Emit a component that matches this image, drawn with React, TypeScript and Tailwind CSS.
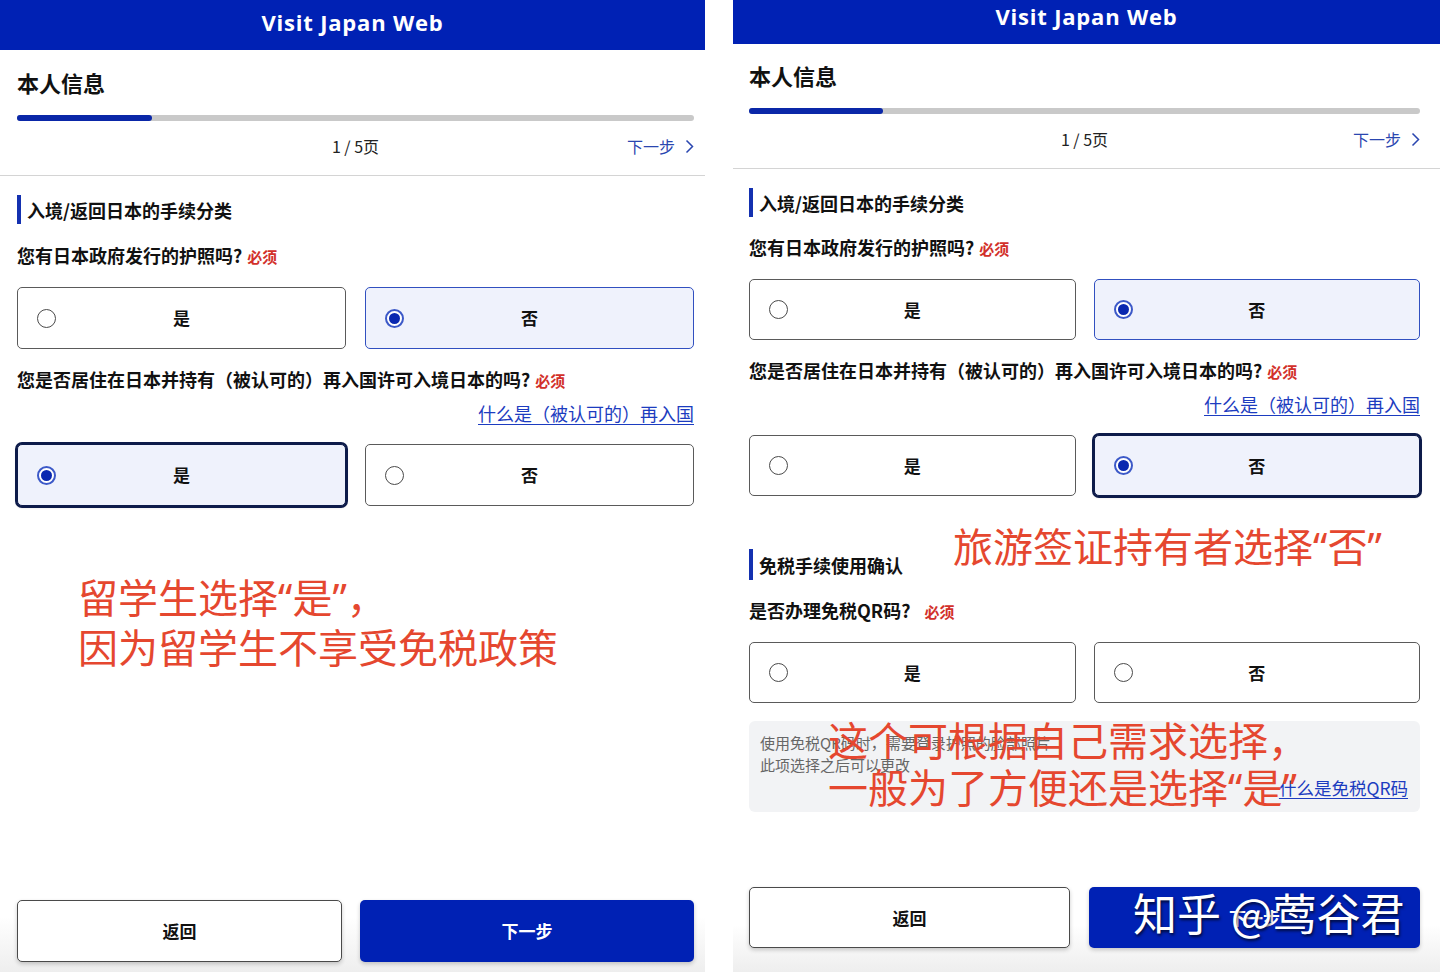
import React from "react";

type OptState = "none" | "sel" | "focus";

function Radio({ checked }: { checked: boolean }) {
  if (checked) {
    return (
      <span className="flex h-[19px] w-[19px] shrink-0 items-center justify-center rounded-full border-2 border-[#3c59c8] bg-white">
        <span className="h-[11px] w-[11px] rounded-full bg-[#0a28b0]" />
      </span>
    );
  }
  return <span className="h-[19px] w-[19px] shrink-0 rounded-full border-[1.5px] border-[#4a4a4a] bg-white" />;
}

function Option({ label, state, h }: { label: string; state: OptState; h: string }) {
  const base = "flex flex-1 items-center rounded-[5px] pl-[19px] pr-[38px]";
  const cls =
    state === "none"
      ? "border border-[#5a5a5a] bg-white"
      : state === "sel"
      ? "border border-[#3150c0] bg-[#eff2fc]"
      : "border border-[#0d1b4a] bg-[#eff2fc] ring-2 ring-[#0d1b4a] shadow-[0_1px_3px_rgba(0,0,0,0.3)]";
  return (
    <div className={`${base} ${cls} ${h}`}>
      <Radio checked={state !== "none"} />
      <span className="flex-1 text-center text-[17px] font-bold text-[#111]">{label}</span>
    </div>
  );
}

function OptionPair({ a, b, h, gap }: { a: OptState; b: OptState; h: string; gap: string }) {
  return (
    <div className={`flex ${gap}`}>
      <Option label="是" state={a} h={h} />
      <Option label="否" state={b} h={h} />
    </div>
  );
}

function Header({ h, pt }: { h: string; pt: string }) {
  return (
    <div className={`flex w-full justify-center bg-[#0021b4] ${h} ${pt}`}>
      <span className="font-['Open_Sans',sans-serif] text-[22px] leading-[30px] font-bold tracking-[0.8px] text-white">
        Visit Japan Web
      </span>
    </div>
  );
}

function Chevron() {
  return (
    <svg width="9" height="15" viewBox="0 0 9 15" className="ml-[10px]">
      <polyline points="1.5,1.5 7.5,7.5 1.5,13.5" fill="none" stroke="#2a46b0" strokeWidth="1.5" />
    </svg>
  );
}

function TopBlock() {
  return (
    <>
      <div className="text-[22px] leading-[30px] font-bold text-[#111]">本人信息</div>
      <div className="mt-[18px] h-[6px] w-full rounded-full bg-[#c9c9c9]">
        <div className="h-[6px] w-[20%] rounded-full bg-[#0a27a8]" />
      </div>
      <div className="mt-[14px] grid grid-cols-3 items-center text-[16px] leading-[22px]">
        <span />
        <span className="text-center text-[#222]">1 / 5页</span>
        <span className="flex items-center justify-end text-[#2a46b0]">
          下一步
          <Chevron />
        </span>
      </div>
    </>
  );
}

function SectionTitle({ text, h }: { text: string; h: string }) {
  return (
    <div className="flex items-center">
      <span className={`w-[4px] bg-[#1431b0] ${h}`} />
      <span className="ml-[6px] text-[18px] leading-[24px] font-bold text-[#111]">{text}</span>
    </div>
  );
}

function Question({ text, mt, reqGap = "ml-[5px]" }: { text: string; mt: string; reqGap?: string }) {
  return (
    <div className={`flex items-baseline ${mt} leading-[26px]`}>
      <span className="text-[18px] font-bold text-[#111]">{text}</span>
      <span className={`${reqGap} text-[15px] font-bold text-[#d2302a]`}>必须</span>
    </div>
  );
}

function Link({ text, mt }: { text: string; mt: string }) {
  return (
    <div className={`${mt} flex justify-end text-[18px] leading-[24px]`}>
      <span className="text-[#1c3cc0] underline underline-offset-[3px]">{text}</span>
    </div>
  );
}

function Buttons({ leftW, h, gap }: { leftW: string; h: string; gap: string }) {
  return (
    <div className={`flex ${gap}`}>
      <div
        className={`flex ${leftW} ${h} items-center justify-center rounded-[5px] border border-[#4a4a4a] bg-white text-[17px] font-bold text-[#111] shadow-[0_2px_4px_rgba(0,0,0,0.2)]`}
      >
        返回
      </div>
      <div
        className={`flex flex-1 ${h} items-center justify-center rounded-[5px] bg-[#0021b4] text-[17px] font-bold text-white shadow-[0_2px_4px_rgba(0,0,0,0.2)]`}
      >
        下一步
      </div>
    </div>
  );
}

const NOTE = "font-['Noto_Sans_CJK_SC',sans-serif] font-normal text-[40px] text-[#e5472f] whitespace-nowrap";

function Q({ c }: { c: string }) {
  return <span className="font-['Noto_Sans',sans-serif]">{c}</span>;
}

function LeftPanel() {
  return (
    <div className="relative flex h-[972px] w-[705px] shrink-0 flex-col bg-white">
      <Header h="h-[50px]" pt="pt-[7px]" />
      <div className="mt-[17px] pr-[11px] pl-[17px]">
        <TopBlock />
      </div>
      <div className="mt-[18px] h-px w-full bg-[#d4d4d4]" />
      <div className="pr-[11px] pl-[17px]">
        <div className="mt-[19px]">
          <SectionTitle text="入境/返回日本的手续分类" h="h-[29px]" />
        </div>
        <Question text="您有日本政府发行的护照吗?" mt="mt-[18px]" />
        <div className="mt-[17px]">
          <OptionPair a="none" b="sel" h="h-[62px]" gap="gap-[19px]" />
        </div>
        <Question text="您是否居住在日本并持有（被认可的）再入国许可入境日本的吗?" mt="mt-[17px]" />
        <Link text="什么是（被认可的）再入国" mt="mt-[7px]" />
        <div className="mt-[19px]">
          <OptionPair a="focus" b="none" h="h-[62px]" gap="gap-[19px]" />
        </div>
        <div className={`mt-[66px] ml-[61px] ${NOTE} leading-[49px]`}>
          <div>
            留学生选择<Q c="“" />是<Q c="”" />，
          </div>
          <div>因为留学生不享受免税政策</div>
        </div>
      </div>
      <div className="flex-1" />
      <div className="bg-linear-to-b from-white from-40% to-[#eeeeee] pt-[20px] pr-[11px] pb-[10px] pl-[17px]">
        <Buttons leftW="w-[325px]" h="h-[62px]" gap="gap-[18px]" />
      </div>
    </div>
  );
}

function RightPanel() {
  return (
    <div className="relative flex h-[972px] w-[707px] shrink-0 flex-col bg-white">
      <Header h="h-[44px]" pt="pt-[1px]" />
      <div className="mt-[16px] pr-[20px] pl-[16px]">
        <TopBlock />
      </div>
      <div className="mt-[18px] h-px w-full bg-[#d4d4d4]" />
      <div className="pr-[20px] pl-[16px]">
        <div className="mt-[19px]">
          <SectionTitle text="入境/返回日本的手续分类" h="h-[29px]" />
        </div>
        <Question text="您有日本政府发行的护照吗?" mt="mt-[17px]" />
        <div className="mt-[17px]">
          <OptionPair a="none" b="sel" h="h-[61px]" gap="gap-[18px]" />
        </div>
        <Question text="您是否居住在日本并持有（被认可的）再入国许可入境日本的吗?" mt="mt-[17px]" />
        <Link text="什么是（被认可的）再入国" mt="mt-[7px]" />
        <div className="mt-[19px]">
          <OptionPair a="none" b="focus" h="h-[61px]" gap="gap-[18px]" />
        </div>
        <div className="mt-[53px]">
          <SectionTitle text="免税手续使用确认" h="h-[31px]" />
        </div>
        <Question text="是否办理免税QR码?" mt="mt-[17px]" reqGap="ml-[14px]" />
        <div className="mt-[17px]">
          <OptionPair a="none" b="none" h="h-[61px]" gap="gap-[18px]" />
        </div>
        <div className="mt-[18px] rounded-[6px] bg-[#f2f3f5] pt-[11px] pr-[12px] pb-[12px] pl-[11px]">
          <div className="text-[15px] leading-[22px] text-[#666]">使用免税QR码时，需要登录护照的脸部照片</div>
          <div className="text-[15px] leading-[22px] text-[#666]">此项选择之后可以更改</div>
          <div className="flex justify-end text-[17.5px] leading-[24px]">
            <span className="text-[#1c3cc0] underline underline-offset-[3px]">什么是免税QR码</span>
          </div>
        </div>
      </div>
      <div className="flex-1" />
      <div className="bg-linear-to-b from-white from-55% to-[#eeeeee] pt-[20px] pr-[20px] pb-[24px] pl-[16px]">
        <Buttons leftW="w-[321px]" h="h-[61px]" gap="gap-[19px]" />
      </div>

      <div className={`absolute top-[521px] left-[220px] ${NOTE} leading-[48px]`}>
        旅游签证持有者选择<Q c="“" />否<Q c="”" />
      </div>
      <div className={`absolute top-[716px] left-[95px] ${NOTE} leading-[47px]`}>
        <div>这个可根据自己需求选择，</div>
        <div>
          一般为了方便还是选择<Q c="“" />是<Q c="”" />
        </div>
      </div>
      <div className="absolute top-[885px] left-[400px] font-['Noto_Sans_CJK_SC',sans-serif] text-[44px] leading-[54px] font-normal whitespace-nowrap text-white [text-shadow:1px_2px_3px_rgba(0,0,0,0.7)]">
        知乎 @莺谷君
      </div>
    </div>
  );
}

export default function App() {
  return (
    <div className="flex h-[972px] w-[1440px] overflow-hidden bg-white font-['Noto_Sans_CJK_SC','Noto_Sans',sans-serif]">
      <LeftPanel />
      <div className="w-[28px] shrink-0 bg-white" />
      <RightPanel />
    </div>
  );
}
